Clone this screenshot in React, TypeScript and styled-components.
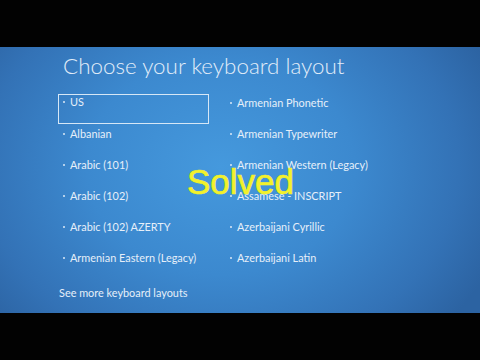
import React from "react";
import styled, { createGlobalStyle } from "styled-components";

const GlobalStyle = createGlobalStyle`
  html, body {
    margin: 0;
    padding: 0;
    background: #000;
  }
  body {
    font-family: Lato, "Open Sans", sans-serif;
  }
`;

const Screen = styled.div`
  width: 480px;
  height: 360px;
  display: flex;
  flex-direction: column;
  background: #000;
  overflow: hidden;
`;

const LetterBox = styled.div<{ $h: number }>`
  height: ${(p) => p.$h}px;
  flex-shrink: 0;
  background: #020202;
`;

const Panel = styled.div`
  position: relative;
  height: 266px;
  flex-shrink: 0;
  box-sizing: border-box;
  padding: 4px 0 0 58px;
  background:
    radial-gradient(ellipse 62% 90% at 46% 45%, #4599dd 0%, #3c89cf 45%, #3372b6 80%, #2c63a2 100%);
  color: #e4eefa;
`;

const Title = styled.h1`
  margin: 0 0 13px 5px;
  font-size: 22.4px;
  font-weight: 300;
  line-height: 30px;
  color: #e2edf9;
`;

const Grid = styled.div`
  display: grid;
  grid-template-columns: 151px 170px;
  column-gap: 16px;
  grid-auto-flow: column;
  grid-template-rows: repeat(6, 31px);
`;

const Item = styled.div<{ $selected?: boolean }>`
  display: flex;
  align-items: center;
  align-self: start;
  box-sizing: border-box;
  height: ${(p) => (p.$selected ? 30 : 14)}px;
  margin-top: ${(p) => (p.$selected ? 0 : 2)}px;
  padding: ${(p) => (p.$selected ? "0 0 14px 4px" : "0 0 0 5px")};
  border: ${(p) => (p.$selected ? "1.5px solid #d6e7f6" : "none")};
  font-size: 10.9px;
  line-height: 14px;
  color: #e6eff9;
  white-space: nowrap;
`;

const Bullet = styled.span`
  width: 2px;
  height: 2px;
  margin-right: 5px;
  background: #dbe8f6;
  border-radius: 1px;
`;

const MoreLink = styled.div`
  margin-top: 6px;
  padding-left: 1px;
  font-size: 10.9px;
  line-height: 14px;
  color: #e6eff9;
`;

const Stamp = styled.div`
  position: absolute;
  left: 187px;
  top: 115px;
  font-family: "Liberation Sans", Arial, sans-serif;
  font-size: 35px;
  font-weight: 400;
  color: #f2f12a;
  -webkit-text-stroke: 0.7px #f2f12a;
`;

const layouts = [
  "US",
  "Albanian",
  "Arabic (101)",
  "Arabic (102)",
  "Arabic (102) AZERTY",
  "Armenian Eastern (Legacy)",
  "Armenian Phonetic",
  "Armenian Typewriter",
  "Armenian Western (Legacy)",
  "Assamese - INSCRIPT",
  "Azerbaijani Cyrillic",
  "Azerbaijani Latin",
];

export default function App() {
  return (
    <>
      <GlobalStyle />
      <Screen>
        <LetterBox $h={47} />
        <Panel>
          <Title>Choose your keyboard layout</Title>
          <Grid>
            {layouts.map((name, i) => (
              <Item key={name} $selected={i === 0}>
                <Bullet />
                {name}
              </Item>
            ))}
          </Grid>
          <MoreLink>See more keyboard layouts</MoreLink>
          <Stamp>Solved</Stamp>
        </Panel>
        <LetterBox $h={47} />
      </Screen>
    </>
  );
}
